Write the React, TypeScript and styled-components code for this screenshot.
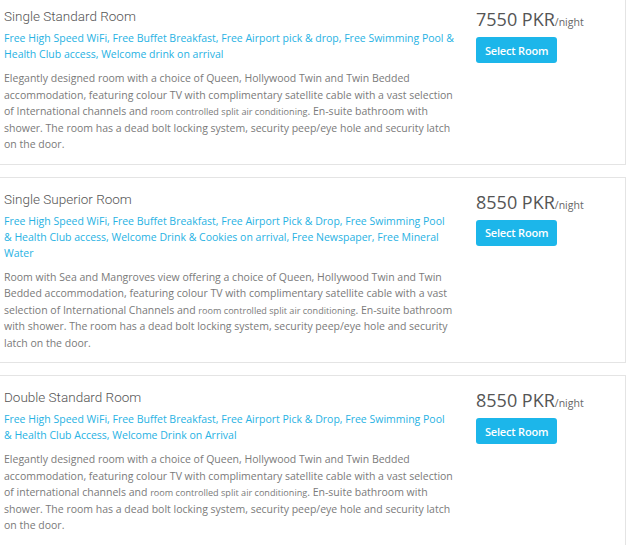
import React from "react";
import styled, { createGlobalStyle } from "styled-components";

const Global = createGlobalStyle`
  html, body { margin: 0; padding: 0; background: #ffffff; }
  body { font-family: "Open Sans", "Liberation Sans", sans-serif; overflow: hidden; }
`;

const List = styled.div`
  display: flex;
  flex-direction: column;
  gap: 12px;
  margin: -6px 0 0 -12px;
  width: 638px;
`;

const Card = styled.div`
  display: grid;
  grid-template-columns: 451px 1fr;
  column-gap: 21px;
  border: 1px solid #e4e4e4;
  background: #fff;
  padding: 11px 10px 11px 15px;
`;

const Info = styled.div`
  display: flex;
  flex-direction: column;
`;

const Title = styled.h3`
  margin: 0;
  font-family: Roboto, "Open Sans", sans-serif;
  font-weight: 300;
  font-size: 13.5px;
  line-height: 20px;
  color: #555;
`;

const Features = styled.p`
  margin: 4px 0 0;
  font-size: 10.5px;
  line-height: 16px;
  color: #27b2e3;
`;

const Desc = styled.p`
  margin: 8px 0 0;
  font-size: 10.5px;
  line-height: 16.5px;
  color: #7a7a7a;
`;

const Small = styled.span`
  font-size: 9.1px;
  line-height: 1;
`;

const Side = styled.div`
  display: flex;
  flex-direction: column;
  align-items: flex-start;
`;

const Price = styled.div`
  font-size: 18px;
  line-height: 26px;
  color: #555;
  white-space: nowrap;
`;

const Per = styled.span`
  font-size: 10.5px;
  color: #666;
`;

const Button = styled.button`
  margin-top: 2px;
  height: 26px;
  padding: 0 9px;
  border: none;
  border-radius: 3px;
  background: #1cb6ea;
  color: #fff;
  font-family: "Open Sans", sans-serif;
  font-weight: 600;
  font-size: 11px;
  letter-spacing: -0.2px;
  cursor: pointer;
`;

type Room = {
  title: string;
  features: string;
  desc: [string, string];
  price: string;
};

const rooms: Room[] = [
  {
    title: "Single Standard Room",
    features:
      "Free High Speed WiFi, Free Buffet Breakfast, Free Airport pick & drop, Free Swimming Pool & Health Club access, Welcome drink on arrival",
    desc: [
      "Elegantly designed room with a choice of Queen, Hollywood Twin and Twin Bedded accommodation, featuring colour TV with complimentary satellite cable with a vast selection of International channels and ",
      ". En-suite bathroom with shower. The room has a dead bolt locking system, security peep/eye hole and security latch on the door.",
    ],
    price: "7550",
  },
  {
    title: "Single Superior Room",
    features:
      "Free High Speed WiFi, Free Buffet Breakfast, Free Airport Pick & Drop, Free Swimming Pool &\u00a0Health Club access, Welcome Drink & Cookies on arrival, Free Newspaper, Free Mineral Water",
    desc: [
      "Room with Sea and Mangroves view offering a choice of Queen, Hollywood Twin and Twin Bedded accommodation, featuring colour TV with complimentary satellite cable with a vast selection of International Channels and ",
      ". En-suite bathroom with shower. The room has a dead bolt locking system, security peep/eye hole and security latch on the door.",
    ],
    price: "8550",
  },
  {
    title: "Double Standard Room",
    features:
      "Free High Speed WiFi, Free Buffet Breakfast, Free Airport Pick & Drop, Free Swimming Pool &\u00a0Health Club Access, Welcome Drink on Arrival",
    desc: [
      "Elegantly designed room with a choice of Queen, Hollywood Twin and Twin Bedded accommodation, featuring colour TV with complimentary satellite cable with a vast selection of international channels and ",
      ". En-suite bathroom with shower. The room has a dead bolt locking system, security peep/eye hole and security latch on the door.",
    ],
    price: "8550",
  },
];

export default function App() {
  return (
    <>
      <Global />
      <List>
        {rooms.map((r) => (
          <Card key={r.title}>
            <Info>
              <Title>{r.title}</Title>
              <Features>{r.features}</Features>
              <Desc>
                {r.desc[0]}
                <Small>room controlled split air conditioning</Small>
                {r.desc[1]}
              </Desc>
            </Info>
            <Side>
              <Price>
                {r.price} PKR<Per>/night</Per>
              </Price>
              <Button>Select Room</Button>
            </Side>
          </Card>
        ))}
      </List>
    </>
  );
}
